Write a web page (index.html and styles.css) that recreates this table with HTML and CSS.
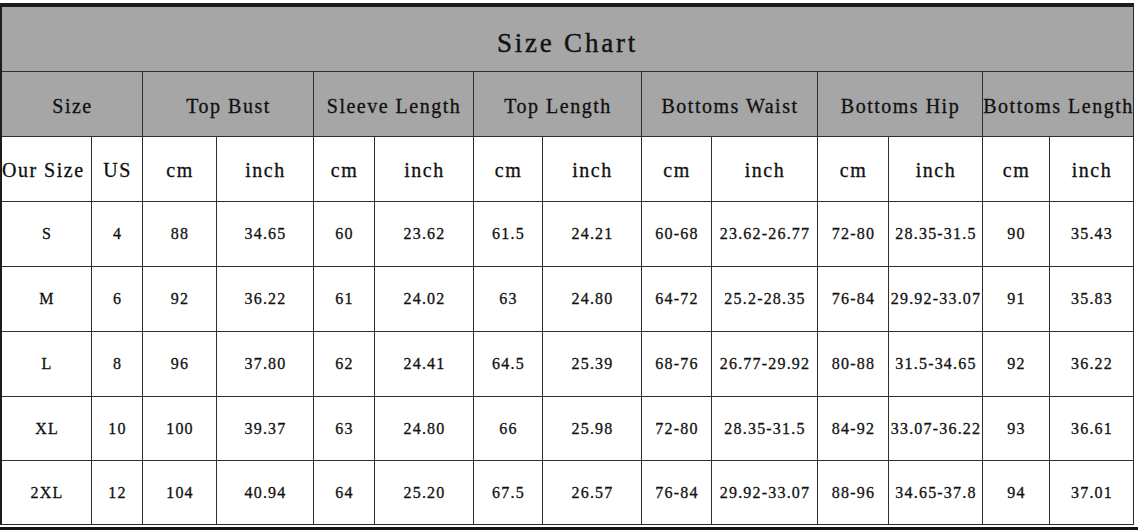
FILE: index.html
```html
<!DOCTYPE html>
<html lang="en">
<head>
<meta charset="utf-8">
<title>Size Chart</title>
<link rel="stylesheet" href="styles.css">
</head>
<body>
<div class="page">
  <div class="chart">
    <div class="cell title">Size Chart</div>

    <div class="cell head span2">Size</div>
    <div class="cell head span2">Top Bust</div>
    <div class="cell head span2">Sleeve Length</div>
    <div class="cell head span2">Top Length</div>
    <div class="cell head span2">Bottoms Waist</div>
    <div class="cell head span2">Bottoms Hip</div>
    <div class="cell head span2">Bottoms Length</div>

    <div class="cell unit our">Our Size</div>
    <div class="cell unit">US</div>
    <div class="cell unit">cm</div>
    <div class="cell unit">inch</div>
    <div class="cell unit">cm</div>
    <div class="cell unit">inch</div>
    <div class="cell unit">cm</div>
    <div class="cell unit">inch</div>
    <div class="cell unit">cm</div>
    <div class="cell unit">inch</div>
    <div class="cell unit">cm</div>
    <div class="cell unit">inch</div>
    <div class="cell unit">cm</div>
    <div class="cell unit">inch</div>

    <div class="cell">S</div><div class="cell">4</div><div class="cell">88</div><div class="cell">34.65</div><div class="cell">60</div><div class="cell">23.62</div><div class="cell">61.5</div><div class="cell">24.21</div><div class="cell">60-68</div><div class="cell">23.62-26.77</div><div class="cell">72-80</div><div class="cell">28.35-31.5</div><div class="cell">90</div><div class="cell">35.43</div>

    <div class="cell">M</div><div class="cell">6</div><div class="cell">92</div><div class="cell">36.22</div><div class="cell">61</div><div class="cell">24.02</div><div class="cell">63</div><div class="cell">24.80</div><div class="cell">64-72</div><div class="cell">25.2-28.35</div><div class="cell">76-84</div><div class="cell">29.92-33.07</div><div class="cell">91</div><div class="cell">35.83</div>

    <div class="cell">L</div><div class="cell">8</div><div class="cell">96</div><div class="cell">37.80</div><div class="cell">62</div><div class="cell">24.41</div><div class="cell">64.5</div><div class="cell">25.39</div><div class="cell">68-76</div><div class="cell">26.77-29.92</div><div class="cell">80-88</div><div class="cell">31.5-34.65</div><div class="cell">92</div><div class="cell">36.22</div>

    <div class="cell">XL</div><div class="cell">10</div><div class="cell">100</div><div class="cell">39.37</div><div class="cell">63</div><div class="cell">24.80</div><div class="cell">66</div><div class="cell">25.98</div><div class="cell">72-80</div><div class="cell">28.35-31.5</div><div class="cell">84-92</div><div class="cell">33.07-36.22</div><div class="cell">93</div><div class="cell">36.61</div>

    <div class="cell">2XL</div><div class="cell">12</div><div class="cell">104</div><div class="cell">40.94</div><div class="cell">64</div><div class="cell">25.20</div><div class="cell">67.5</div><div class="cell">26.57</div><div class="cell">76-84</div><div class="cell">29.92-33.07</div><div class="cell">88-96</div><div class="cell">34.65-37.8</div><div class="cell">94</div><div class="cell">37.01</div>
  </div>
  <div class="footer-bar"></div>
</div>
</body>
</html>
```

FILE: styles.css
```css
html, body {
  margin: 0;
  padding: 0;
  background: #ffffff;
}

.page {
  width: 1138px;
  height: 530px;
  padding-top: 3px;
  box-sizing: border-box;
  overflow: hidden;
  font-family: "Liberation Serif", "Times New Roman", serif;
  color: #111111;
}

.chart {
  width: 1134px;
  box-sizing: border-box;
  display: grid;
  grid-template-columns: 89px 50px 73px 96px 60px 98px 68px 98px 69px 105px 70px 93px 66px 83px;
  grid-template-rows: 64px 64px 64px 64px 64px 64px 63px 63px;
  gap: 1px;
  background: #2e2e2e;
  border-top: 4px solid #1c1c1c;
  border-left: 2px solid #1c1c1c;
  border-right: 1px solid #2a2a2a;
  border-bottom: 1px solid #2a2a2a;
}

.cell {
  background: #ffffff;
  display: flex;
  align-items: center;
  justify-content: center;
  white-space: nowrap;
  font-size: 16px;
  letter-spacing: 1.2px;
  padding-left: 1px;
  -webkit-text-stroke: 0.3px #111111;
}

.title {
  grid-column: 1 / -1;
  background: #a6a6a6;
  font-size: 27px;
  letter-spacing: 2.8px;
  padding-top: 9px;
  padding-left: 0;
  -webkit-text-stroke: 0.4px #111111;
}

.head {
  background: #a6a6a6;
  font-size: 20px;
  letter-spacing: 1.5px;
  padding-top: 4px;
}

.span2 {
  grid-column: span 2;
}

.unit {
  font-size: 20px;
  letter-spacing: 1.5px;
  padding-top: 3px;
}

.our {
  justify-content: flex-start;
  padding-left: 0;
}

.footer-bar {
  margin-top: 2px;
  height: 5px;
  background: #141414;
}
```
